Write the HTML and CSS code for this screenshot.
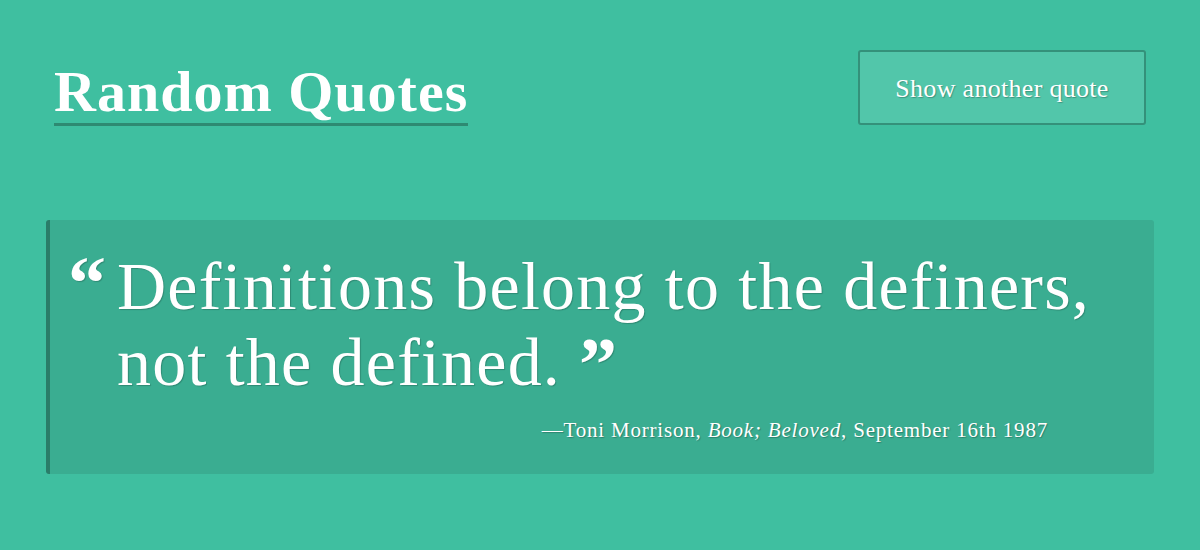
FILE: index.html
```html
<!DOCTYPE html>
<html lang="en">
<head>
<meta charset="utf-8">
<title>Random Quotes</title>
<link rel="stylesheet" href="styles.css">
</head>
<body>
<div class="page">
  <header class="top">
    <h1 class="title">Random Quotes</h1>
    <button class="next" type="button">Show another quote</button>
  </header>
  <figure class="quote">
    <blockquote class="quote-text">
      <span class="mark open">&ldquo;</span>
      <p class="quote-body">Definitions belong to the definers, not the defined.</p>
    </blockquote>
    <figcaption class="cite">&mdash;Toni Morrison, <em>Book; Beloved</em>, September 16th 1987</figcaption>
  </figure>
</div>
</body>
</html>
```

FILE: styles.css
```css
html, body {
  margin: 0;
  padding: 0;
  background: #3fbfa0;
  height: 100%;
}
.page {
  display: flex;
  flex-direction: column;
  padding: 50px 54px 0 46px;
  font-family: "Liberation Serif", "DejaVu Serif", serif;
  color: #fff;
}
.top {
  display: flex;
  justify-content: space-between;
  align-items: flex-start;
  padding-left: 8px;
}
.title {
  margin: 13px 0 0 0;
  font-size: 58px;
  font-weight: bold;
  line-height: 58px;
  padding-bottom: 2px;
  border-bottom: 3px solid #2e8a72;
  letter-spacing: 1px;
}
.next {
  width: 288px;
  height: 75px;
  background: #52c6aa;
  border: 2px solid #34917a;
  border-radius: 3px;
  color: #fff;
  font-family: "Liberation Serif", "DejaVu Serif", serif;
  font-size: 26px;
  letter-spacing: 0.3px;
  text-shadow: 1px 1px 1px rgba(0,0,0,0.25);
  padding: 3px 0 0 0;
}
.quote {
  margin: 94px 0 0 0;
  width: 1108px;
  box-sizing: border-box;
  background: #3aad91;
  border-left: 4px solid #2a7d69;
  border-radius: 3px;
  padding: 28px 0 32px 0;
}
.quote-text {
  margin: 0;
  display: flex;
  align-items: flex-start;
  padding-left: 18px;
}
.quote-body {
  margin: 0;
  font-size: 68px;
  line-height: 76px;
  letter-spacing: 1.2px;
  width: 1010px;
  text-shadow: 1px 1px 1px rgba(0,0,0,0.2);
}
.quote-body::after {
  content: "\201D";
  font-weight: bold;
  font-size: 76px;
  line-height: 0;
  letter-spacing: 0;
  margin-left: 18px;
  vertical-align: -5px;
}
.mark {
  font-weight: bold;
  font-size: 76px;
  line-height: 76px;
  text-shadow: 1px 1px 1px rgba(0,0,0,0.2);
}
.open {
  width: 49px;
  flex: none;
  margin-top: -3px;
}
.cite {
  display: block;
  text-align: right;
  padding-right: 106px;
  margin-top: 18px;
  font-size: 21px;
  line-height: 24px;
  letter-spacing: 0.8px;
  text-shadow: 1px 1px 1px rgba(0,0,0,0.25);
}
```
